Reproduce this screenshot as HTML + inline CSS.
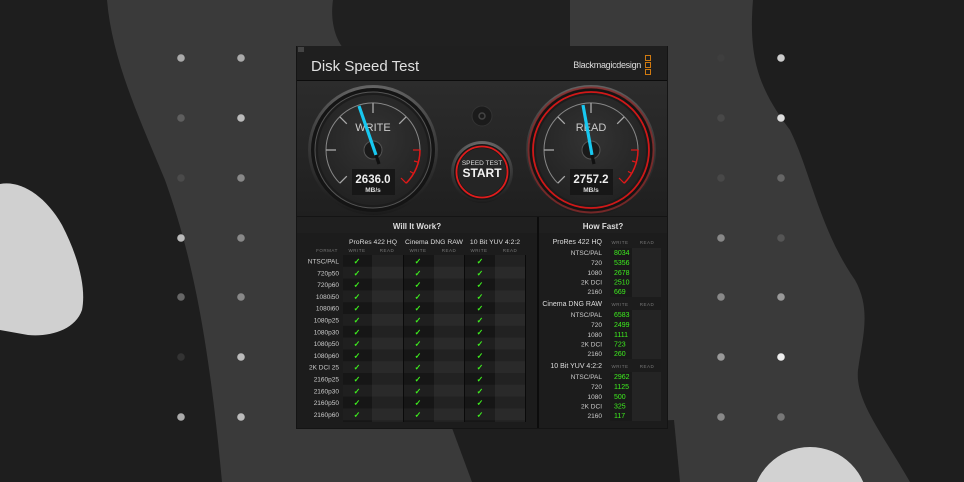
<!DOCTYPE html>
<html><head><meta charset="utf-8"><style>
html,body{margin:0;padding:0;width:964px;height:482px;overflow:hidden;background:#1e1e1e}
svg{display:block}
text{font-family:"Liberation Sans",sans-serif}
</style></head><body>
<svg width="964" height="482" viewBox="0 0 964 482" xmlns="http://www.w3.org/2000/svg" style="overflow:hidden">
<defs>
<clipPath id="cl"><rect width="964" height="482"/></clipPath>
<radialGradient id="bez" cx="50%" cy="30%" r="70%"><stop offset="0" stop-color="#9a9a9a"/><stop offset="0.6" stop-color="#4a4a4a"/><stop offset="1" stop-color="#1a1a1a"/></radialGradient>
<radialGradient id="face" cx="50%" cy="40%" r="60%"><stop offset="0" stop-color="#333"/><stop offset="1" stop-color="#222"/></radialGradient>
<linearGradient id="top" x1="0" y1="0" x2="0" y2="1"><stop offset="0" stop-color="#2c2c2c"/><stop offset="1" stop-color="#1f1f1f"/></linearGradient>
<g id="gauge">
 <circle r="65" fill="url(#bez)"/>
 <circle r="62" fill="#141414"/>
 <circle r="58" fill="#1c1c1c" stroke="#555" stroke-width="1"/>
 <circle r="55" fill="url(#face)"/>
 <path d="M -33.2 33.2 A 47 47 0 1 1 33.2 33.2" fill="none" stroke="#888" stroke-width="1"/>
 <g stroke="#aaa" stroke-width="1.3">
  <line x1="-33.2" y1="33.2" x2="-26.2" y2="26.2"/>
  <line x1="-47" y1="0" x2="-37" y2="0"/>
  <line x1="-33.2" y1="-33.2" x2="-26.2" y2="-26.2"/>
  <line x1="0" y1="-47" x2="0" y2="-37"/>
  <line x1="33.2" y1="-33.2" x2="26.2" y2="-26.2"/>
 </g>
 <path d="M 47 0 A 47 47 0 0 1 33.2 33.2" fill="none" stroke="#e01818" stroke-width="1.5"/>
 <g stroke="#e01818" stroke-width="1.2">
  <line x1="47" y1="0" x2="40" y2="0"/>
  <line x1="45.4" y1="12.2" x2="41" y2="11"/>
  <line x1="40.7" y1="23.5" x2="37" y2="21.4"/>
  <line x1="33.2" y1="33.2" x2="28" y2="28"/>
 </g>
 <circle r="9" fill="#1a1a1a" stroke="#555" stroke-width="1"/>
 <rect x="-21" y="19" width="43" height="26" fill="#171717"/>
</g>
</defs>
<g clip-path="url(#cl)">
<rect width="964" height="482" fill="#1e1e1e"/>
<path d="M107 0 C112 60 140 120 165 180 C190 250 208 330 222 482 L910 482 C880 430 855 400 858 370 C862 340 872 310 855 280 C820 230 810 170 790 130 C760 90 748 60 753 0 Z" fill="#3a3a3a"/>
<path d="M333 0 C330 20 335 40 345 50 L570 50 L570 0 Z" fill="#202020"/>
<path d="M452 428 L472 482 L680 482 L674 420 Z" fill="#1e1e1e"/>
<path d="M0 184 C20 180 45 195 62 225 C80 260 86 290 82 310 C75 330 50 337 28 335 L0 330 Z" fill="#d0d0d0"/>
<circle cx="810" cy="505" r="58" fill="#d2d2d2"/>
</g>
<g>
<circle cx="181" cy="58" r="3.8" fill="#aaa"/><circle cx="181" cy="118" r="3.8" fill="#5e5e5e"/><circle cx="181" cy="178" r="3.8" fill="#4a4a4a"/><circle cx="181" cy="238" r="3.8" fill="#bbb"/><circle cx="181" cy="297" r="3.8" fill="#666"/><circle cx="181" cy="357" r="3.8" fill="#333"/><circle cx="181" cy="417" r="3.8" fill="#aaa"/>
<circle cx="241" cy="58" r="3.8" fill="#aaa"/><circle cx="241" cy="118" r="3.8" fill="#bbb"/><circle cx="241" cy="178" r="3.8" fill="#888"/><circle cx="241" cy="238" r="3.8" fill="#888"/><circle cx="241" cy="297" r="3.8" fill="#888"/><circle cx="241" cy="357" r="3.8" fill="#bbb"/><circle cx="241" cy="417" r="3.8" fill="#bbb"/>
<circle cx="721" cy="58" r="3.8" fill="#3e3e3e"/><circle cx="721" cy="118" r="3.8" fill="#484848"/><circle cx="721" cy="178" r="3.8" fill="#484848"/><circle cx="721" cy="238" r="3.8" fill="#888"/><circle cx="721" cy="297" r="3.8" fill="#888"/><circle cx="721" cy="357" r="3.8" fill="#999"/><circle cx="721" cy="417" r="3.8" fill="#888"/>
<circle cx="781" cy="58" r="3.8" fill="#ccc"/><circle cx="781" cy="118" r="3.8" fill="#ddd"/><circle cx="781" cy="178" r="3.8" fill="#666"/><circle cx="781" cy="238" r="3.8" fill="#555"/><circle cx="781" cy="297" r="3.8" fill="#999"/><circle cx="781" cy="357" r="3.8" fill="#eee"/><circle cx="781" cy="417" r="3.8" fill="#777"/>
</g>
<rect x="296" y="46" width="372" height="383" fill="#141414"/>
<rect x="297" y="46" width="370" height="34" fill="#1f1f1f"/>
<rect x="298" y="47" width="6" height="5" fill="#444"/>
<text x="311" y="71" font-size="15" fill="#e0e0e0">Disk Speed Test</text>
<text x="641" y="68" font-size="9" fill="#ddd" text-anchor="end" letter-spacing="-0.3">Blackmagicdesign</text>
<g fill="none" stroke="#d07a10" stroke-width="1"><rect x="645.5" y="55.5" width="5" height="5"/><rect x="645.5" y="62.5" width="5" height="5"/><rect x="645.5" y="69.5" width="5" height="5"/></g>
<rect x="297" y="80" width="370" height="1" fill="#0c0c0c"/>
<rect x="297" y="81" width="370" height="135" fill="url(#top)"/>
<g transform="translate(373,150)"><use href="#gauge"/>
<text x="0" y="-19" font-size="11" fill="#ccc" text-anchor="middle">WRITE</text>
<line x1="3" y1="5" x2="-14" y2="-44" stroke="#18c8f0" stroke-width="3.2"/>
<line x1="3" y1="5" x2="6" y2="14" stroke="#111" stroke-width="3.2"/>
<text x="0" y="33" font-size="11.5" font-weight="bold" fill="#eee" text-anchor="middle">2636.0</text>
<text x="0" y="42" font-size="6.5" font-weight="bold" fill="#ddd" text-anchor="middle">MB/s</text>
</g>
<g transform="translate(591,150)"><use href="#gauge"/>
<circle r="58" fill="none" stroke="#d01818" stroke-width="1.8"/>
<circle r="62.5" fill="none" stroke="#8a2a2a" stroke-width="2" opacity="0.8"/>
<text x="0" y="-19" font-size="11" fill="#ccc" text-anchor="middle">READ</text>
<line x1="1" y1="5" x2="-8" y2="-45" stroke="#18c8f0" stroke-width="3.2"/>
<line x1="1" y1="5" x2="3" y2="14" stroke="#111" stroke-width="3.2"/>
<text x="0" y="33" font-size="11.5" font-weight="bold" fill="#eee" text-anchor="middle">2757.2</text>
<text x="0" y="42" font-size="6.5" font-weight="bold" fill="#ddd" text-anchor="middle">MB/s</text>
</g>
<circle cx="482" cy="116" r="10" fill="#1b1b1b" stroke="#333"/>
<circle cx="482" cy="116" r="3" fill="none" stroke="#444" stroke-width="1.5"/>
<circle cx="482" cy="172" r="31" fill="url(#bez)"/>
<circle cx="482" cy="172" r="28" fill="#181818"/>
<circle cx="482" cy="172" r="25.5" fill="none" stroke="#e01c1c" stroke-width="1.8"/>
<circle cx="482" cy="172" r="24" fill="#252525"/>
<text x="482" y="165" font-size="6.5" fill="#ddd" text-anchor="middle">SPEED TEST</text>
<text x="482" y="177" font-size="12" font-weight="bold" fill="#f2f2f2" text-anchor="middle">START</text>
<rect x="297" y="217" width="240" height="211" fill="#1c1c1c"/>
<rect x="539" y="217" width="128" height="211" fill="#1c1c1c"/>
<rect x="297" y="217" width="240" height="16" fill="#1f1f1f"/>
<rect x="539" y="217" width="128" height="16" fill="#1f1f1f"/>
<text x="417" y="229" font-size="8" font-weight="bold" fill="#ddd" text-anchor="middle">Will It Work?</text>
<text x="603" y="229" font-size="8" font-weight="bold" fill="#ddd" text-anchor="middle">How Fast?</text>
<text x="373" y="244" font-size="6.8" fill="#ddd" text-anchor="middle">ProRes 422 HQ</text>
<text x="434" y="244" font-size="6.8" fill="#ddd" text-anchor="middle">Cinema DNG RAW</text>
<text x="495" y="244" font-size="6.8" fill="#ddd" text-anchor="middle">10 Bit YUV 4:2:2</text>
<g font-size="4.5" fill="#777" text-anchor="middle" letter-spacing="0.5">
<text x="327" y="252">FORMAT</text><text x="357" y="252">WRITE</text><text x="387" y="252">READ</text><text x="418" y="252">WRITE</text><text x="449" y="252">READ</text><text x="479" y="252">WRITE</text><text x="510" y="252">READ</text>
</g>
<rect x="343" y="255" width="29" height="167" fill="#161616"/><rect x="372" y="255" width="31" height="167" fill="#222"/>
<rect x="404" y="255" width="30" height="167" fill="#161616"/><rect x="434" y="255" width="31" height="167" fill="#222"/>
<rect x="465" y="255" width="30" height="167" fill="#161616"/><rect x="495" y="255" width="30" height="167" fill="#222"/>
<g fill="#ffffff" opacity="0.035">
<rect x="343" y="266.8" width="182" height="11.8"/><rect x="343" y="290.4" width="182" height="11.8"/><rect x="343" y="314" width="182" height="11.8"/><rect x="343" y="337.6" width="182" height="11.8"/><rect x="343" y="361.2" width="182" height="11.8"/><rect x="343" y="384.8" width="182" height="11.8"/><rect x="343" y="408.4" width="182" height="11.8"/>
</g>
<rect x="403" y="255" width="1" height="167" fill="#0a0a0a"/><rect x="464" y="255" width="1" height="167" fill="#0a0a0a"/><rect x="525" y="255" width="1" height="167" fill="#0a0a0a"/>
<g font-size="6.5" fill="#ccc" text-anchor="end">
<text x="339" y="263.5">NTSC/PAL</text><text x="339" y="275.3">720p50</text><text x="339" y="287.1">720p60</text><text x="339" y="298.9">1080i50</text><text x="339" y="310.7">1080i60</text><text x="339" y="322.5">1080p25</text><text x="339" y="334.3">1080p30</text><text x="339" y="346.1">1080p50</text><text x="339" y="357.9">1080p60</text><text x="339" y="369.7">2K DCI 25</text><text x="339" y="381.5">2160p25</text><text x="339" y="393.3">2160p30</text><text x="339" y="405.1">2160p50</text><text x="339" y="416.9">2160p60</text>
</g>
<g font-size="8" font-weight="bold" fill="#3ef01e" text-anchor="middle">
<text x="357" y="264">✓</text><text x="357" y="275.8">✓</text><text x="357" y="287.6">✓</text><text x="357" y="299.4">✓</text><text x="357" y="311.2">✓</text><text x="357" y="323">✓</text><text x="357" y="334.8">✓</text><text x="357" y="346.6">✓</text><text x="357" y="358.4">✓</text><text x="357" y="370.2">✓</text><text x="357" y="382">✓</text><text x="357" y="393.8">✓</text><text x="357" y="405.6">✓</text><text x="357" y="417.4">✓</text>
<text x="418" y="264">✓</text><text x="418" y="275.8">✓</text><text x="418" y="287.6">✓</text><text x="418" y="299.4">✓</text><text x="418" y="311.2">✓</text><text x="418" y="323">✓</text><text x="418" y="334.8">✓</text><text x="418" y="346.6">✓</text><text x="418" y="358.4">✓</text><text x="418" y="370.2">✓</text><text x="418" y="382">✓</text><text x="418" y="393.8">✓</text><text x="418" y="405.6">✓</text><text x="418" y="417.4">✓</text>
<text x="480" y="264">✓</text><text x="480" y="275.8">✓</text><text x="480" y="287.6">✓</text><text x="480" y="299.4">✓</text><text x="480" y="311.2">✓</text><text x="480" y="323">✓</text><text x="480" y="334.8">✓</text><text x="480" y="346.6">✓</text><text x="480" y="358.4">✓</text><text x="480" y="370.2">✓</text><text x="480" y="382">✓</text><text x="480" y="393.8">✓</text><text x="480" y="405.6">✓</text><text x="480" y="417.4">✓</text>
</g>
<rect x="537" y="217" width="2" height="211" fill="#0c0c0c"/>
<rect x="610" y="248" width="22" height="49" fill="#191919"/><rect x="632" y="248" width="29" height="49" fill="#242424"/>
<rect x="610" y="310" width="22" height="49" fill="#191919"/><rect x="632" y="310" width="29" height="49" fill="#242424"/>
<rect x="610" y="372" width="22" height="49" fill="#191919"/><rect x="632" y="372" width="29" height="49" fill="#242424"/>
<g font-size="7" fill="#ddd" text-anchor="end">
<text x="602" y="244">ProRes 422 HQ</text><text x="602" y="306">Cinema DNG RAW</text><text x="602" y="368">10 Bit YUV 4:2:2</text>
</g>
<g font-size="4.5" fill="#777" text-anchor="middle" letter-spacing="0.5">
<text x="620" y="244">WRITE</text><text x="647" y="244">READ</text><text x="620" y="306">WRITE</text><text x="647" y="306">READ</text><text x="620" y="368">WRITE</text><text x="647" y="368">READ</text>
</g>
<g font-size="6.5" fill="#ccc" text-anchor="end">
<text x="602" y="255">NTSC/PAL</text><text x="602" y="265">720</text><text x="602" y="275">1080</text><text x="602" y="284.5">2K DCI</text><text x="602" y="294">2160</text>
<text x="602" y="317">NTSC/PAL</text><text x="602" y="327">720</text><text x="602" y="337">1080</text><text x="602" y="346.5">2K DCI</text><text x="602" y="356">2160</text>
<text x="602" y="379">NTSC/PAL</text><text x="602" y="389">720</text><text x="602" y="399">1080</text><text x="602" y="408.5">2K DCI</text><text x="602" y="418">2160</text>
</g>
<g font-size="7" fill="#3ef01e" text-anchor="start">
<text x="614" y="255">8034</text><text x="614" y="265">5356</text><text x="614" y="275">2678</text><text x="614" y="284.5">2510</text><text x="614" y="294">669</text>
<text x="614" y="317">6583</text><text x="614" y="327">2499</text><text x="614" y="337">1111</text><text x="614" y="346.5">723</text><text x="614" y="356">260</text>
<text x="614" y="379">2962</text><text x="614" y="389">1125</text><text x="614" y="399">500</text><text x="614" y="408.5">325</text><text x="614" y="418">117</text>
</g>
</svg>
</body></html>
